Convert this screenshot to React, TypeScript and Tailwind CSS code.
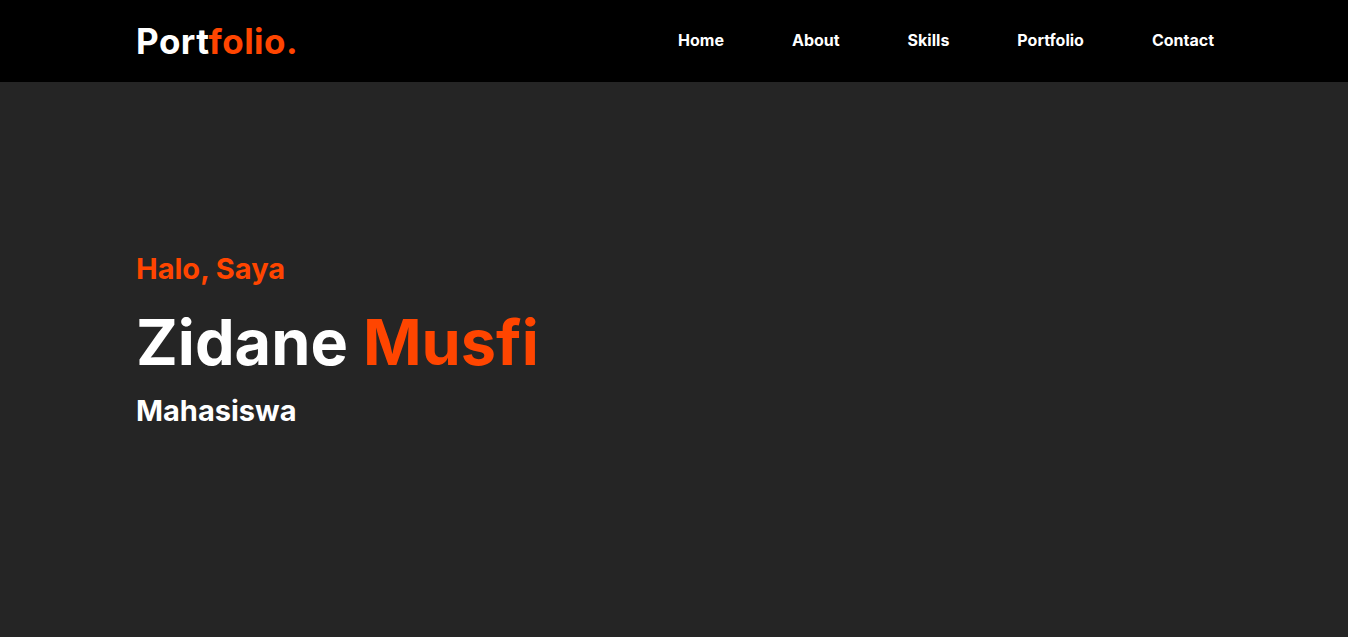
import React from "react";

const navLinks = ["Home", "About", "Skills", "Portfolio", "Contact"];

function Header() {
  return (
    <header className="h-[82px] bg-black">
      <div className="mx-auto flex h-full w-[1080px] items-center justify-between">
        <a href="#" className="pl-[2px] text-[35px] font-bold leading-none tracking-[0.5px] text-white">
          Port<span className="text-[#ff4500]">folio.</span>
        </a>
        <nav className="mb-[2px] flex items-center gap-[68px]">
          {navLinks.map((link) => (
            <a key={link} href="#" className="text-[16px] font-bold text-white">
              {link}
            </a>
          ))}
        </nav>
      </div>
    </header>
  );
}

function Hero() {
  return (
    <section className="h-[555px] bg-[#252525]">
      <div className="mx-auto w-[1080px] pl-[2px] pt-[172px]">
        <h3 className="text-[29px] font-bold leading-none text-[#ff4500]">Halo, Saya</h3>
        <h1 className="mt-[28px] text-[63px] font-bold leading-none text-white">
          Zidane <span className="text-[#ff4500]">Musfi</span>
        </h1>
        <h2 className="mt-[22px] text-[29px] font-bold leading-none text-white">Mahasiswa</h2>
      </div>
    </section>
  );
}

export default function App() {
  return (
    <div className="min-h-screen bg-[#252525] font-['Inter',sans-serif]">
      <Header />
      <Hero />
    </div>
  );
}
